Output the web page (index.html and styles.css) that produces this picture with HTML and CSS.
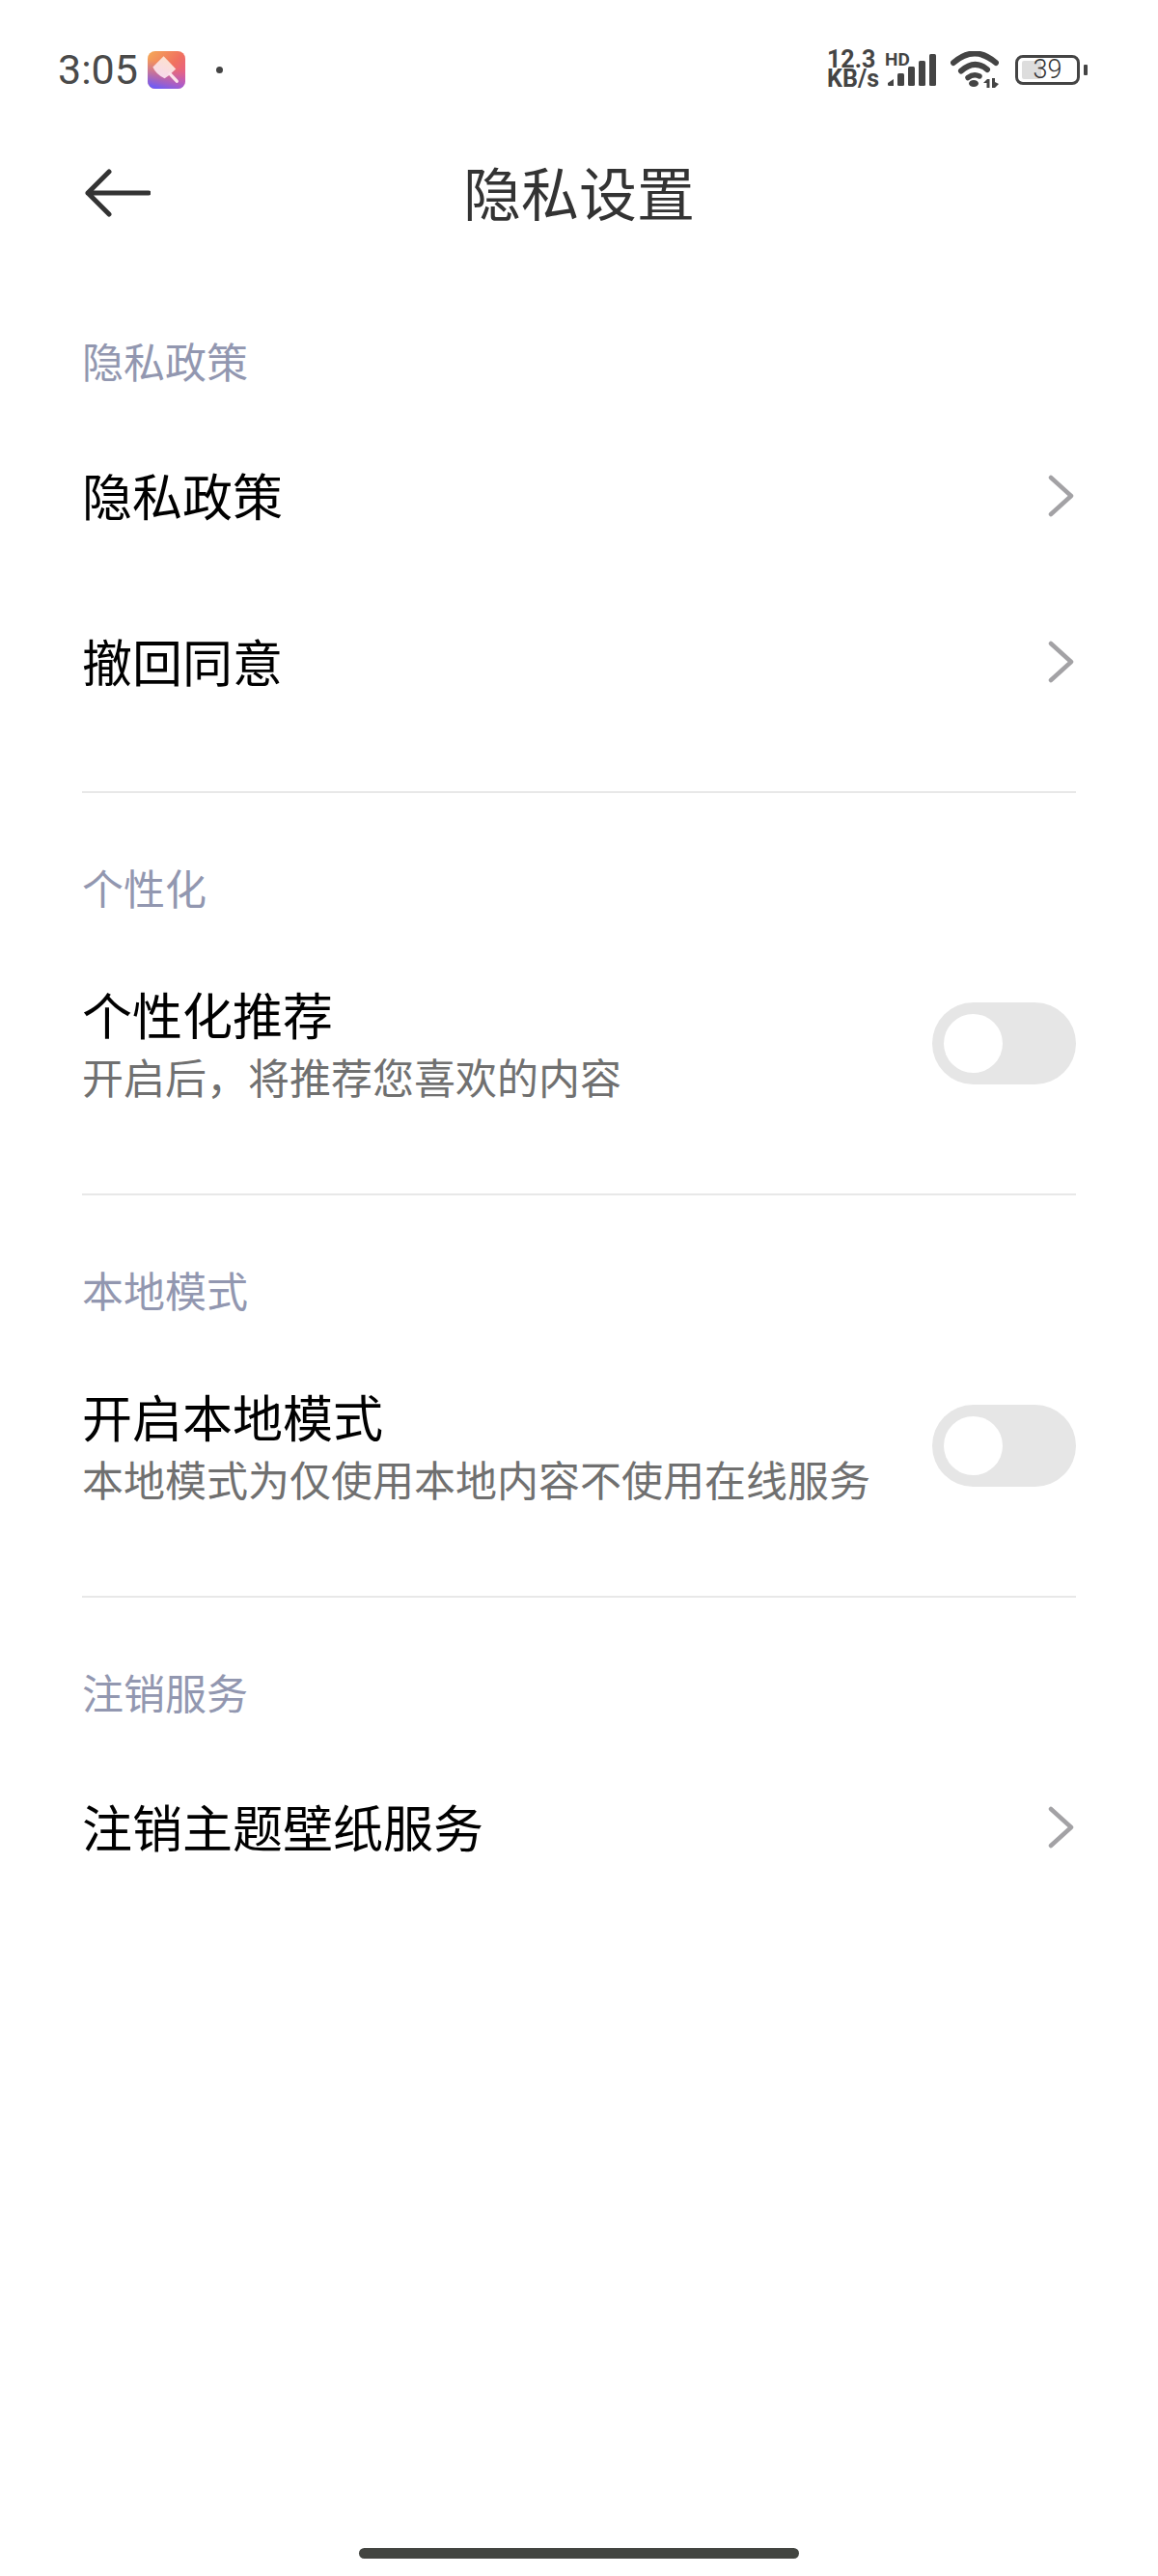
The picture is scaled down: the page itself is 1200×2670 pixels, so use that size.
FILE: index.html
```html
<!DOCTYPE html>
<html lang="zh-CN">
<head>
    <meta charset="UTF-8">
    <meta name="viewport" content="width=device-width, initial-scale=1.0">
    <title>隐私设置</title>
    <link rel="stylesheet" href="styles.css">
</head>
<body>

<div class="page">
    <div class="status-bar">
        <div class="status-left">
            <span class="status-time">3:05</span>
            <svg class="app-icon" viewBox="0 0 40 40">
                <defs>
                    <linearGradient id="iconBase" x1="0" y1="0" x2="1" y2="0.9">
                        <stop offset="0" stop-color="#f5ab58"/>
                        <stop offset="0.55" stop-color="#f0705f"/>
                        <stop offset="1" stop-color="#e2589c"/>
                    </linearGradient>
                    <linearGradient id="iconGlow" x1="0.3" y1="1" x2="0.5" y2="0.35">
                        <stop offset="0" stop-color="#6f5cf5"/>
                        <stop offset="1" stop-color="#b060d0" stop-opacity="0"/>
                    </linearGradient>
                    <linearGradient id="iconBrush" x1="0.7" y1="0" x2="0.3" y2="1">
                        <stop offset="0" stop-color="#fde2cc"/>
                        <stop offset="1" stop-color="#f6d8ee"/>
                    </linearGradient>
                </defs>
                <rect width="40" height="40" rx="8" fill="url(#iconBase)"/>
                <rect width="40" height="40" rx="8" fill="url(#iconGlow)"/>
                <path d="M17 5.5 L30 19 L22.5 26 L18 29 Q9 25 5.5 17 Z" fill="url(#iconBrush)"/>
                <path d="M23.5 24 L31 32" stroke="#fbe3ea" stroke-width="3.5" stroke-linecap="round"/>
            </svg>
            <span class="status-dot"></span>
        </div>
        <div class="status-right">
            <div class="net-speed">
                <span>12.3</span>
                <span>KB/s</span>
            </div>
            <div class="signal">
                <span class="signal-hd">HD</span>
                <svg class="signal-bars" viewBox="0 0 50 33">
                    <path d="M0 30 L6 26 V33 H1.5 Q0 33 0 31.5 Z" fill="#444"/>
                    <rect x="10" y="20" width="7" height="13" rx="1.5" fill="#444"/>
                    <rect x="21" y="13" width="7" height="20" rx="1.5" fill="#444"/>
                    <rect x="32" y="7" width="7" height="26" rx="1.5" fill="#444"/>
                    <rect x="43" y="0" width="7" height="33" rx="1.5" fill="#444"/>
                </svg>
            </div>
            <svg class="wifi" viewBox="0 0 50 38">
                <path d="M3 12 Q25 -7 47 12" fill="none" stroke="#444" stroke-width="6" stroke-linecap="round"/>
                <path d="M11 20.5 Q25 8 38 19" fill="none" stroke="#444" stroke-width="6" stroke-linecap="round"/>
                <path d="M18 27.5 Q24 23 30 26" fill="none" stroke="#444" stroke-width="5.5" stroke-linecap="round"/>
                <ellipse cx="24" cy="33.5" rx="5" ry="3.5" fill="#444"/>
                <path d="M34 33 L38 29 H40.5 V38 H37.5 V33 Z" fill="#444"/>
                <path d="M43 28 H46 V32 L50 34 L46 38 H43 Z" fill="#444"/>
            </svg>
            <div class="battery">
                <div class="battery-body">
                    <span class="battery-fill"></span>
                    <span class="battery-level">39</span>
                </div>
                <span class="battery-nub"></span>
            </div>
        </div>
    </div>

    <div class="header">
        <svg class="back-icon" viewBox="0 0 68 50">
            <path d="M25 3 L3 25 L25 47 M3 25 H66" fill="none" stroke="#333" stroke-width="5" stroke-linecap="round" stroke-linejoin="round"/>
        </svg>
        <h1 class="header-title">隐私设置</h1>
    </div>

    <div class="section">
        <div class="section-label">隐私政策</div>
        <div class="row">
            <div class="row-title">隐私政策</div>
            <svg class="chevron" viewBox="0 0 27 44">
                <path d="M3 3 L24 22 L3 41" fill="none" stroke="#a3a2a5" stroke-width="4.5" stroke-linecap="round" stroke-linejoin="round"/>
            </svg>
        </div>
        <div class="row">
            <div class="row-title">撤回同意</div>
            <svg class="chevron" viewBox="0 0 27 44">
                <path d="M3 3 L24 22 L3 41" fill="none" stroke="#a3a2a5" stroke-width="4.5" stroke-linecap="round" stroke-linejoin="round"/>
            </svg>
        </div>
    </div>

    <div class="section">
        <div class="section-label">个性化</div>
        <div class="row row-tall">
            <div class="row-text">
                <div class="row-title">个性化推荐</div>
                <div class="row-sub">开启后，将推荐您喜欢的内容</div>
            </div>
            <div class="toggle"><span class="toggle-knob"></span></div>
        </div>
    </div>

    <div class="section">
        <div class="section-label">本地模式</div>
        <div class="row row-tall">
            <div class="row-text">
                <div class="row-title">开启本地模式</div>
                <div class="row-sub">本地模式为仅使用本地内容不使用在线服务</div>
            </div>
            <div class="toggle"><span class="toggle-knob"></span></div>
        </div>
    </div>

    <div class="section section-last">
        <div class="section-label">注销服务</div>
        <div class="row">
            <div class="row-title">注销主题壁纸服务</div>
            <svg class="chevron" viewBox="0 0 27 44">
                <path d="M3 3 L24 22 L3 41" fill="none" stroke="#a3a2a5" stroke-width="4.5" stroke-linecap="round" stroke-linejoin="round"/>
            </svg>
        </div>
    </div>

    <div class="home-bar"></div>
</div>

</body>
</html>
```

FILE: styles.css
```css
body {
    margin: 0;
    background-color: #fff;
    font-family: "Noto Sans CJK SC", "Noto Sans", sans-serif;
    overflow: hidden;
}
.page {
    display: flex;
    flex-direction: column;
    height: 2670px;
    box-sizing: border-box;
    padding-bottom: 18px;
}

/* status bar */
.status-bar {
    display: flex;
    justify-content: space-between;
    align-items: center;
    height: 144px;
    padding: 0 73px 0 60px;
    box-sizing: border-box;
    color: #444;
}
.status-left {
    display: flex;
    align-items: center;
}
.status-time {
    font-family: Roboto, sans-serif;
    font-size: 43px;
    line-height: 48px;
    color: #4a4a4a;
}
.app-icon {
    width: 39px;
    height: 39px;
    margin-left: 10px;
}
.status-dot {
    width: 7px;
    height: 7px;
    margin-left: 32px;
    border-radius: 50%;
    background-color: #444;
}
.status-right {
    display: flex;
    align-items: center;
}
.net-speed {
    display: flex;
    flex-direction: column;
    font-family: Roboto, sans-serif;
    font-weight: 700;
    font-size: 25px;
    line-height: 20px;
}
.signal {
    position: relative;
    width: 50px;
    height: 33px;
    margin-left: 9px;
}
.signal-hd {
    position: absolute;
    top: -3px;
    left: -3px;
    font-family: Roboto, sans-serif;
    font-weight: 700;
    font-size: 19px;
    line-height: 17px;
}
.signal-bars {
    display: block;
    width: 50px;
    height: 33px;
}
.wifi {
    width: 50px;
    height: 38px;
    margin-left: 15px;
}
.battery {
    display: flex;
    align-items: center;
    margin-left: 17px;
}
.battery-body {
    position: relative;
    display: flex;
    justify-content: center;
    align-items: center;
    width: 67px;
    height: 31px;
    box-sizing: border-box;
    border: 3px solid #444;
    border-radius: 8px;
}
.battery-fill {
    position: absolute;
    left: 4px;
    top: 3px;
    bottom: 3px;
    width: 20px;
    border-radius: 2px;
    background-color: #ddd;
}
.battery-level {
    position: relative;
    font-family: Roboto, sans-serif;
    font-weight: 300;
    font-size: 27px;
    line-height: 25px;
    color: #333;
}
.battery-nub {
    width: 4px;
    height: 11px;
    margin-left: 4px;
    border-radius: 1px;
    background-color: #444;
}

/* header */
.header {
    display: grid;
    grid-template-columns: 1fr auto 1fr;
    align-items: center;
    height: 112px;
    padding: 0 88px;
    margin-bottom: 20px;
}
.back-icon {
    width: 68px;
    height: 50px;
}
.header-title {
    margin: 0 0 4px;
    font-size: 60px;
    font-weight: 400;
    line-height: 80px;
    color: #333;
}

/* sections */
.section {
    margin: 0 85px;
    padding: 70px 0 48px;
    border-bottom: 2px solid #e8e8e8;
}
.section-last {
    border-bottom: none;
    padding-bottom: 0;
}
.section-label {
    margin: -3px 0 25px;
    font-size: 43px;
    line-height: 60px;
    color: #9297b0;
}
.row {
    display: flex;
    justify-content: space-between;
    align-items: center;
    height: 172px;
}
.row > .row-title {
    margin-bottom: 2px;
}
.row-tall {
    height: 215px;
}
.row-text {
    margin-top: 2px;
}
.row-title {
    font-size: 52px;
    line-height: 64px;
    color: #000;
}
.row-sub {
    font-size: 43px;
    line-height: 64px;
    color: #707070;
}
.chevron {
    width: 27px;
    height: 44px;
    margin-right: 2px;
}
.toggle {
    display: flex;
    align-items: center;
    width: 149px;
    height: 85px;
    padding-left: 12px;
    box-sizing: border-box;
    border-radius: 43px;
    background-color: #e6e6e6;
}
.toggle-knob {
    width: 61px;
    height: 61px;
    border-radius: 50%;
    background-color: #fff;
}
.home-bar {
    align-self: center;
    width: 456px;
    height: 11px;
    margin-top: auto;
    border-radius: 6px;
    background-color: #434541;
}
```
